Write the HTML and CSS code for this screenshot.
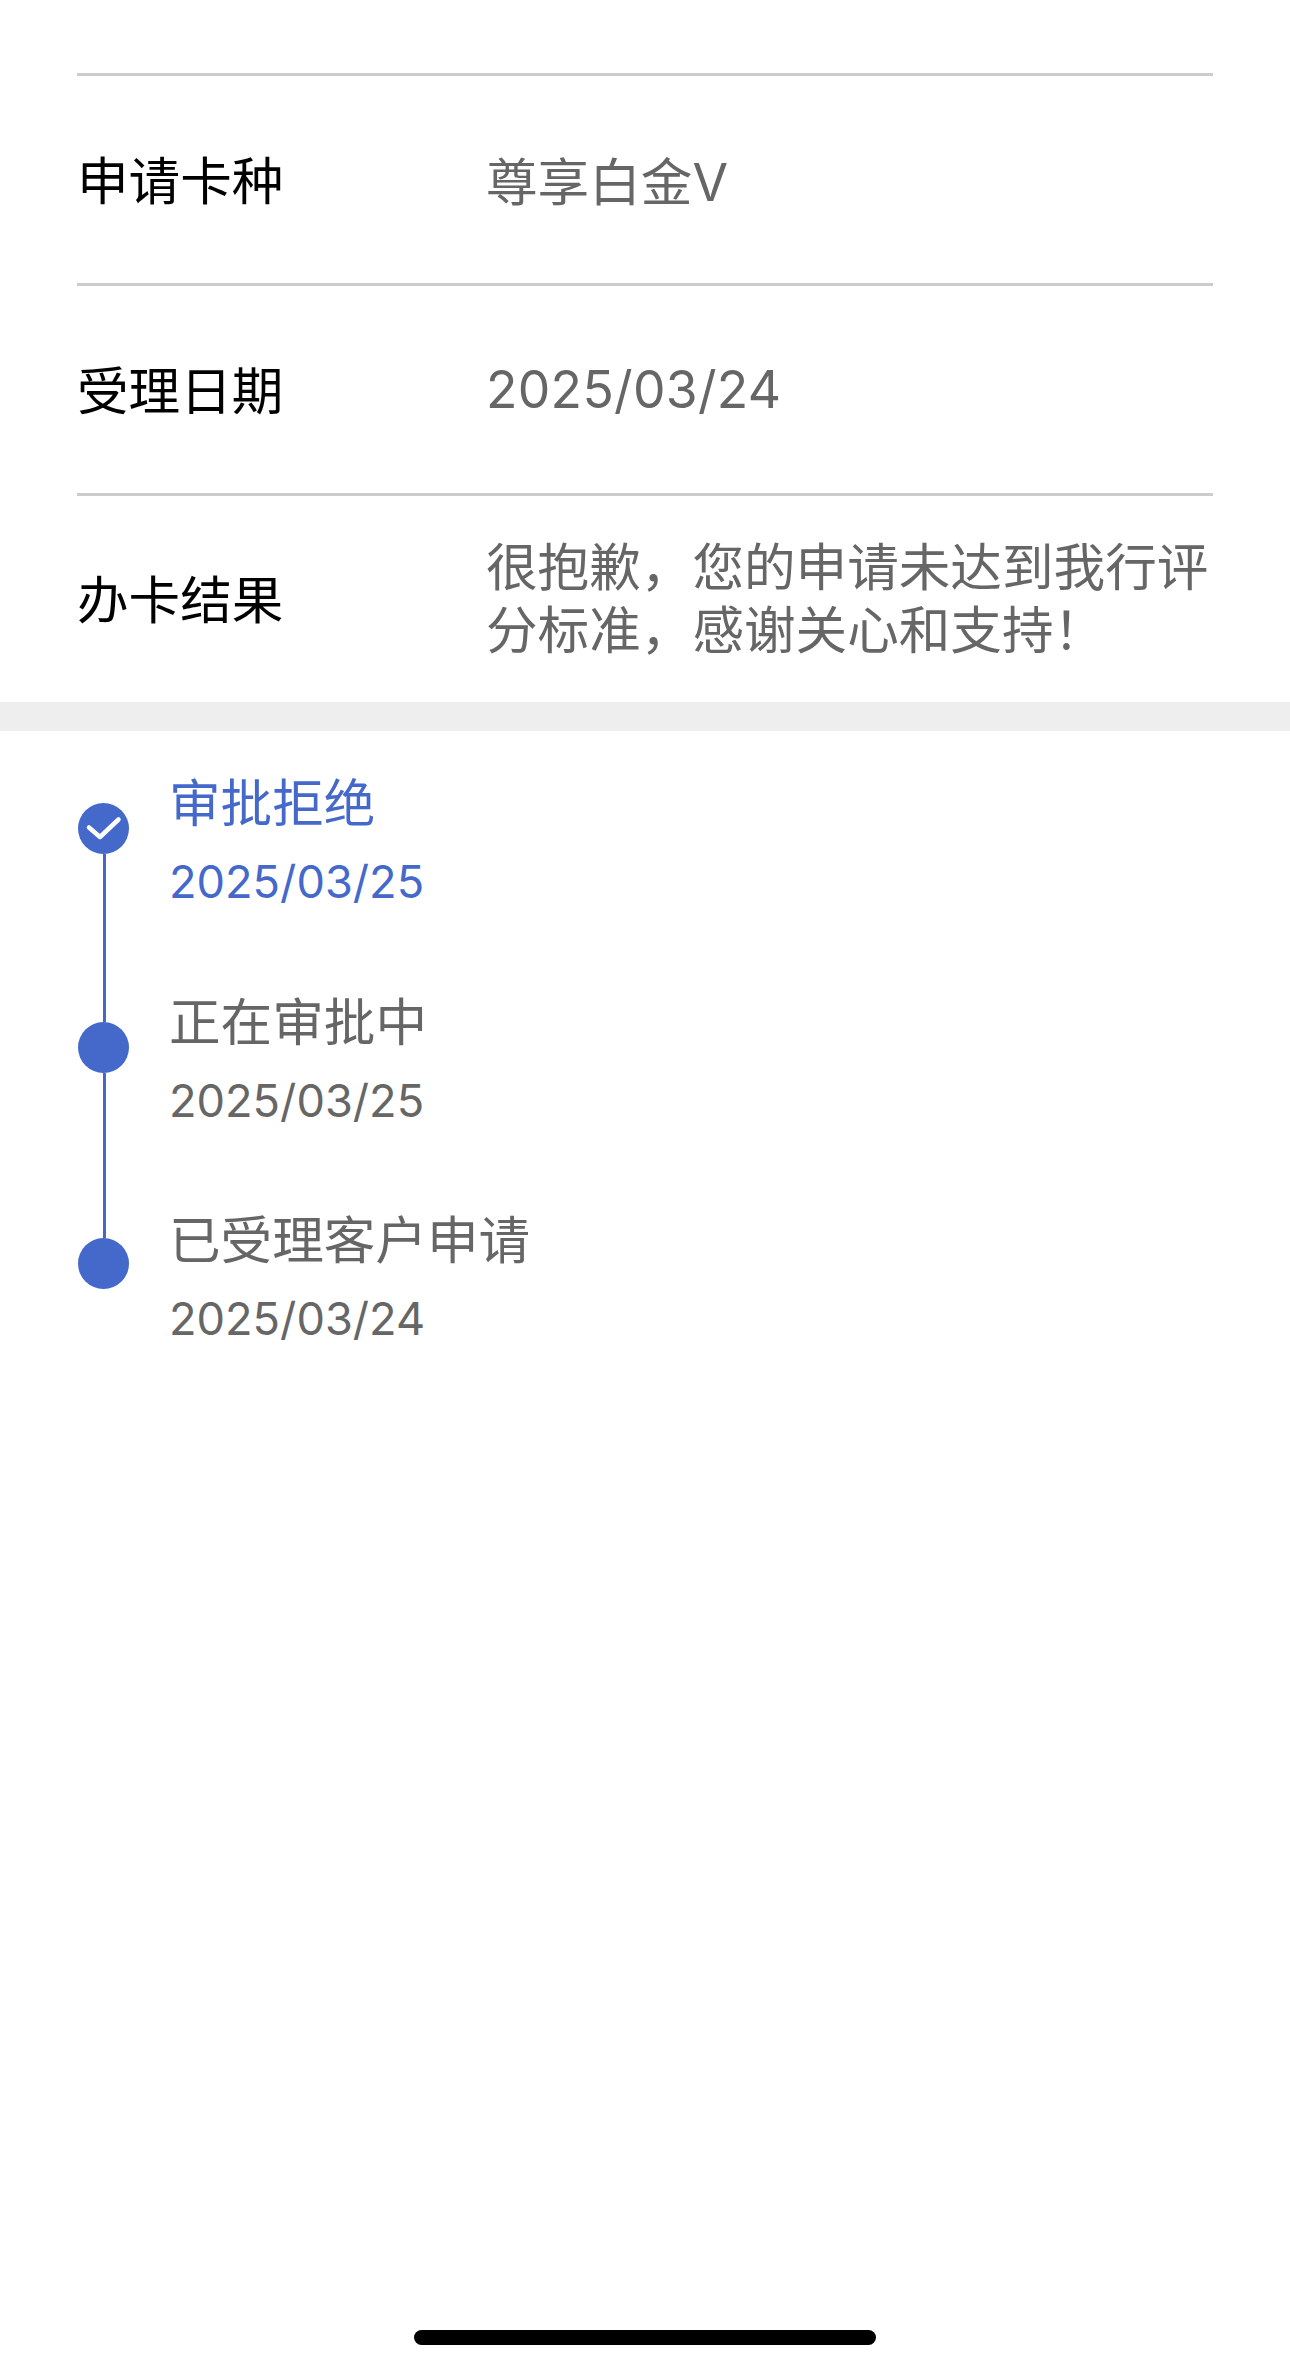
FILE: index.html
```html
<!DOCTYPE html>
<html lang="zh-CN">
<head>
  <meta charset="UTF-8" />
  <meta name="viewport" content="width=device-width, initial-scale=1.0" />
  <title>办卡进度</title>
  <link rel="stylesheet" href="styles.css">
</head>
<body>

  <div class="info">
    <div class="row">
      <div class="label">申请卡种</div>
      <div class="value">尊享白金V</div>
    </div>
    <div class="row">
      <div class="label">受理日期</div>
      <div class="value value-date">2025/03/24</div>
    </div>
    <div class="row">
      <div class="label">办卡结果</div>
      <div class="value">很抱歉，您的申请未达到我行评分标准，感谢关心和支持！</div>
    </div>
  </div>

  <div class="divider"></div>

  <div class="steps">
    <div class="step active">
      <div class="rail">
        <div class="dot">
          <svg width="51" height="51" viewBox="0 0 51 51">
            <path d="M11 24.5 L22 34 L40.5 16.5" fill="none" stroke="#fff" stroke-width="4.5" stroke-linecap="round" stroke-linejoin="round" />
          </svg>
        </div>
        <div class="line"></div>
      </div>
      <div class="text">
        <div class="title">审批拒绝</div>
        <div class="date">2025/03/25</div>
      </div>
    </div>
    <div class="step">
      <div class="rail">
        <div class="dot"></div>
        <div class="line"></div>
      </div>
      <div class="text">
        <div class="title">正在审批中</div>
        <div class="date">2025/03/25</div>
      </div>
    </div>
    <div class="step">
      <div class="rail">
        <div class="dot"></div>
      </div>
      <div class="text">
        <div class="title">已受理客户申请</div>
        <div class="date">2025/03/24</div>
      </div>
    </div>
  </div>

  <div class="home-bar"></div>

</body>
</html>
```

FILE: styles.css
```css
html, body {
  margin: 0;
  padding: 0;
}
body {
  width: 1290px;
  height: 2369px;
  position: relative;
  overflow: hidden;
  background: #fff;
  font-family: Inter, "Noto Sans CJK SC", sans-serif;
}

.info {
  padding: 73px 77px 0;
}
.row {
  display: flex;
  align-items: center;
  height: 207px;
  border-top: 3px solid #ccc;
}
.row:last-child {
  height: 206px;
}
.label {
  width: 409px;
  flex-shrink: 0;
  font-size: 51.6px;
  line-height: 63px;
  margin-top: 3px;
  color: #000;
}
.value {
  font-size: 51.6px;
  line-height: 63px;
  color: #666;
}
.row:first-child .value {
  margin-top: 6px;
}
.value-date {
  letter-spacing: 0.3px;
}

.divider {
  height: 29px;
  background: #eee;
}

.steps {
  padding: 72px 0 0 78px;
}
.step {
  display: flex;
  height: 219px;
}
.step:nth-child(2) {
  height: 216px;
}
.rail {
  width: 51px;
  flex-shrink: 0;
  display: flex;
  flex-direction: column;
  align-items: center;
}
.dot {
  width: 51px;
  height: 51px;
  flex-shrink: 0;
  border-radius: 50%;
  background: #4469cb;
}
.dot svg {
  display: block;
}
.line {
  width: 3px;
  flex: 1;
  margin-left: 2px;
  background: #4469cb;
}
.text {
  margin: -36px 0 0 40px;
  color: #666;
}
.step:last-child .text {
  margin-top: -34px;
}
.title {
  font-size: 51.6px;
  line-height: 72px;
}
.date {
  font-size: 45.2px;
  line-height: 60px;
  margin-top: 13px;
}
.active .text {
  color: #4469cb;
}

.home-bar {
  position: absolute;
  left: 414px;
  top: 2330px;
  width: 462px;
  height: 15px;
  border-radius: 8px;
  background: #000;
}
```
